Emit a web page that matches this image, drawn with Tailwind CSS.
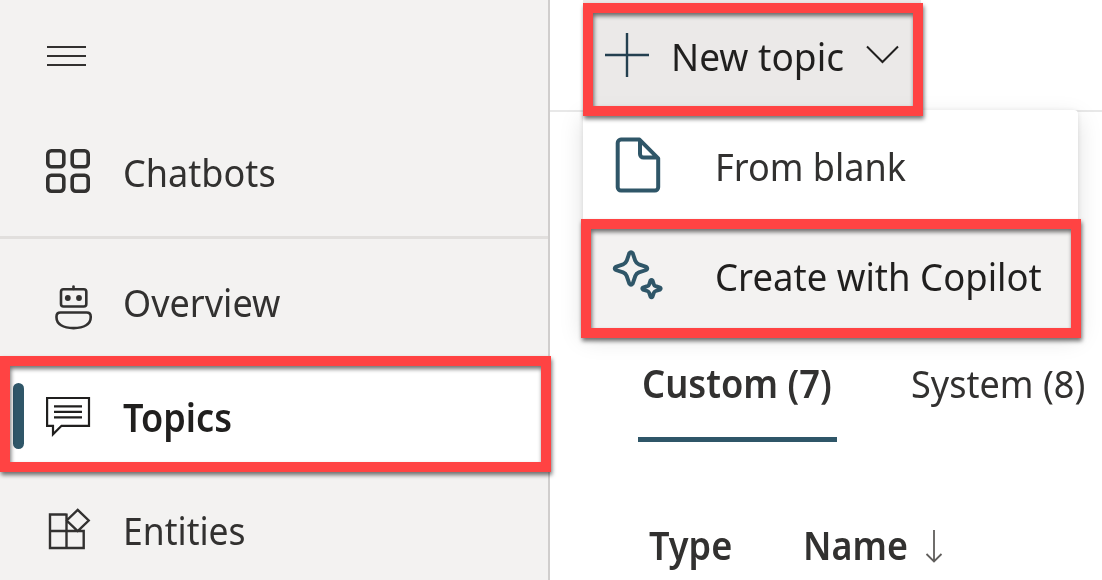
<!DOCTYPE html>
<html lang="en">
<head>
<meta charset="utf-8">
<title>Topics</title>
<script src="https://cdn.jsdelivr.net/npm/@tailwindcss/browser@4"></script>
</head>
<body class="relative flex h-[580px] w-[1102px] overflow-hidden bg-white font-['Noto_Sans','Open_Sans',sans-serif] text-[39px] leading-none whitespace-nowrap text-[#323130]">

<nav class="flex h-full w-[550px] shrink-0 flex-col border-r-2 border-[#d0cecd] bg-[#f3f2f1]">
  <div class="flex h-[108px] shrink-0 items-center pt-1 pl-[46.5px]">
    <div class="flex flex-col gap-[7px]">
      <div class="h-0.5 w-[39px] bg-[#323130]"></div>
      <div class="h-0.5 w-[39px] bg-[#323130]"></div>
      <div class="h-0.5 w-[39px] bg-[#323130]"></div>
    </div>
  </div>
  <a class="flex h-[131px] shrink-0 items-center border-b-3 border-[#e1dfdd] pl-11">
    <svg class="h-14 w-12" viewBox="44 144 48 56" fill="none" stroke="#323130" stroke-width="3.6">
      <rect x="47.8" y="150.8" width="16" height="16" rx="3.6"/><rect x="72.2" y="150.8" width="16" height="16" rx="3.6"/>
      <rect x="47.8" y="175.2" width="16" height="16" rx="3.6"/><rect x="72.2" y="175.2" width="16" height="16" rx="3.6"/>
    </svg>
    <span class="ml-[31px] inline-block origin-left scale-x-[.925] pb-0.5">Chatbots</span>
  </a>
  <a class="mt-2 flex h-[110px] shrink-0 items-center pl-11">
    <svg class="h-14 w-12" viewBox="44 274 48 56" fill="none" stroke="#323130" stroke-width="2.6">
      <rect x="61" y="289.2" width="25.3" height="17.3" rx="2.5"/>
      <path d="M73.5 286.5v2.5" stroke-linecap="round"/>
      <circle cx="67.8" cy="298" r="2.9" fill="#323130" stroke="none"/><circle cx="79" cy="298" r="2.9" fill="#323130" stroke="none"/>
      <path d="M60.5 312.5h26.200c2.400 0 4 1.600 4 4v1c0 6.500-6.500 10.600-17.100 10.600s-17.100-4.100-17.100-10.600v-1c0-2.400 1.600-4 4-4z"/>
    </svg>
    <span class="ml-[31px] inline-block origin-left scale-x-[.925] pb-0.5">Overview</span>
  </a>
  <a class="flex h-[114px] shrink-0 items-center bg-white pt-1 pl-[13px] text-[#201f1e]">
    <div class="-mt-px h-[66px] w-[11px] rounded-full bg-[#2f5668]"></div>
    <svg class="ml-5 h-14 w-12" viewBox="44 388 48 56" fill="none" stroke="#201f1e" stroke-width="2.2">
      <path d="M47.100 398H89V425.800H61.500l-8.500 8.500V425.800h-5.900z"/>
      <path d="M54 406.300h28M54 411.800h28M54 417.300h28"/>
    </svg>
    <span class="ml-[31px] inline-block origin-left scale-x-[.925] font-semibold">Topics</span>
  </a>
  <a class="flex h-[114px] shrink-0 items-center pt-1 pl-11">
    <svg class="h-14 w-12" viewBox="44 502 48 56" fill="none" stroke="#323130" stroke-width="2.4">
      <path d="M66.500 514.500H50v33.500h33.700V531H50M66.500 513.500V548M77.700 509.800l11 10.700-11 10.700-11-10.700z"/>
    </svg>
    <span class="ml-[31px] inline-block origin-left scale-x-[.91] pb-0.5">Entities</span>
  </a>
</nav>

<main class="flex h-full w-[552px] shrink-0 flex-col">
  <div class="flex h-28 shrink-0 border-b-2 border-[#e8e8e8] pl-[33px]">
    <button class="flex h-[110px] w-[338px] items-center bg-[#ebe9e8] pt-0.5 pl-[17px] text-[#201f1e]">
      <svg class="h-14 w-14" viewBox="600 28 56 56" stroke="#233f4f" stroke-width="2.400"><path d="M605 55h44M627 33v44"/></svg>
      <span class="ml-[15px] inline-block w-[179px] origin-left scale-x-[.95] pb-0.5 text-left">New topic</span>
      <svg class="ml-3 h-14 w-10" viewBox="862 28 40 56" fill="none" stroke="#201f1e" stroke-width="2"><path d="M867 46.500l15.500 15.500 15.500-15.500"/></svg>
    </button>
  </div>
  <div class="mt-[215px] flex h-[115px] shrink-0 pl-[88px]">
    <div class="flex w-[199px] items-center border-b-5 border-[#2f5668] pl-1">
      <span class="inline-block origin-left scale-x-[.93] font-semibold">Custom (7)</span>
    </div>
    <div class="flex items-center pb-[5px] pl-[74px]">
      <span class="inline-block origin-left scale-x-[.925]">System (8)</span>
    </div>
  </div>
  <div class="mt-[42px] flex h-[120px] shrink-0 items-center pl-[99px] font-semibold">
    <span class="inline-block w-[154px] origin-left scale-x-[.925]">Type</span>
    <span class="inline-block w-[119px] origin-left scale-x-[.92]">Name</span>
    <svg class="h-14 w-6" viewBox="922 516 24 56" fill="none" stroke="#605e5c" stroke-width="1.800"><path d="M934 530v31.500M926.500 554l7.500 7.500 7.500-7.500"/></svg>
  </div>
</main>

<!-- New topic dropdown -->
<div class="absolute top-[110px] left-[583px] flex w-[495px] flex-col rounded bg-white shadow-[0_8px_24px_rgba(0,0,0,.13),0_1px_5px_rgba(0,0,0,.1)]">
  <div class="flex h-[110px] items-center pt-0.5 pl-[29px]">
    <svg class="h-[60px] w-14" viewBox="612 136 56 60" fill="none" stroke="#2f5668" stroke-width="4" stroke-linejoin="round">
      <path d="M621 139.600h18.500l18.700 18.700v29a3.300 3.300 0 0 1-3.300 3.300H621a3.300 3.300 0 0 1-3.300-3.300V143a3.300 3.300 0 0 1 3.300-3.400zM640 140v14a3.500 3.500 0 0 0 3.500 3.500h14.500"/>
    </svg>
    <span class="ml-[47px] inline-block origin-left scale-x-[.925] pb-0.5">From blank</span>
  </div>
  <div class="flex h-[110px] items-center bg-[#f3f2f1] pt-0.5 pl-[29px] text-[#201f1e]">
    <svg class="h-[60px] w-14" viewBox="612 246 56 60" fill="none" stroke="#2f5668" stroke-width="3.900" stroke-linejoin="round">
      <path d="M629.300 253.200q1.700-2.200 3.400 0l2.600 7.600q1 2.600 3.600 3.600l7.300 2.400q2.200 1.600 0 3.200l-7.300 2.400q-2.600 1-3.600 3.600l-2.600 7.600q-1.700 2.200-3.400 0l-2.600-7.600q-1-2.600-3.600-3.600l-7.300-2.400q-2.200-1.600 0-3.200l7.300-2.400q2.600-1 3.600-3.600z"/>
      <path d="M650.500 280.500q1-1.200 2 0l1.300 3.800q.5 1.400 1.900 1.900l4.400 1.400q1.200 1 0 2l-4.400 1.400q-1.400.500-1.900 1.900l-1.300 3.800q-1 1.200-2 0l-1.300-3.800q-.5-1.400-1.900-1.900l-4.400-1.400q-1.200-1 0-2l4.400-1.400q1.400-.5 1.900-1.900z"/>
    </svg>
    <span class="ml-[47px] inline-block origin-left scale-x-[.936] pb-0.5">Create with Copilot</span>
  </div>
</div>

<!-- Callout frames -->
<div class="absolute top-[356px] left-0 h-[116px] w-[551px] border-10 border-[#ff4343] drop-shadow-[1px_3px_2px_rgba(0,0,0,.55)]"></div>
<div class="absolute top-[3px] left-[583px] h-[113px] w-[340px] border-10 border-[#ff4343] drop-shadow-[1px_3px_2px_rgba(0,0,0,.55)]"></div>
<div class="absolute top-[219px] left-[581px] h-[119px] w-[500px] border-10 border-[#ff4343] drop-shadow-[1px_3px_2px_rgba(0,0,0,.55)]"></div>
</body>
</html>
